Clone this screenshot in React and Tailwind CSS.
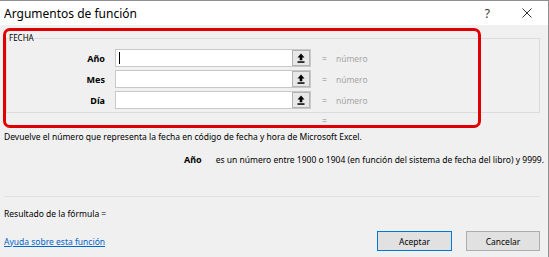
import React from 'react';

function UpArrow() {
  return (
    <svg width="8" height="10" viewBox="0 0 8 10" aria-hidden="true">
      <path d="M4 0.5 L7.5 4.5 L5.3 4.5 L5.3 7.3 L2.7 7.3 L2.7 4.5 L0.5 4.5 Z" fill="#000" />
      <rect x="0.5" y="8.3" width="7" height="1.5" fill="#000" />
    </svg>
  );
}

function ArgRow({ label, cursor }) {
  return (
    <div className="flex items-center h-[18px]">
      <span className="w-[98px] text-right font-bold text-[9px]">{label}</span>
      <div className="ml-[10px] flex h-[18px] w-[196px] border border-[#c8c8c8] bg-white">
        <div className="flex-1 flex items-center pl-[3px]">
          {cursor && <span className="block w-px h-[12px] bg-black" />}
        </div>
        <button
          type="button"
          className="flex w-[18px] items-center justify-center border border-[#b4b4b4] bg-[#e8e8e8]"
        >
          <UpArrow />
        </button>
      </div>
      <span className="ml-[11px] text-[#8c8c8c]">=</span>
      <span className="ml-[9px] text-[#a6a6a6]">número</span>
    </div>
  );
}

export default function App() {
  return (
    <div className="relative flex h-[257px] w-[549px] flex-col overflow-hidden border-t border-r border-[#8f8f8f] bg-[#f0f0f0] font-['Noto_Sans',sans-serif] text-[8.5px] leading-[15px] text-black">
      <div className="flex h-[24px] items-center bg-white pl-[4px] text-[12px]">
        <span className="flex-1">Argumentos de función</span>
        <span className="mr-[32px] text-[12px] text-[#333]">?</span>
        <svg width="10" height="10" viewBox="0 0 10 10" className="mr-[16px]" aria-hidden="true">
          <path d="M0.5 0.5 L9.5 9.5 M9.5 0.5 L0.5 9.5" stroke="#333" strokeWidth="1" />
        </svg>
      </div>

      <div className="flex flex-1 flex-col pl-[4px] pr-[8px]">
        <fieldset className="ml-[2px] mt-[7px] border border-[#dcdcdc] px-0 pb-[3px]">
          <legend className="ml-[2px] text-[8px] leading-[12px]">FECHA</legend>
          <div className="mt-[5px] flex flex-col gap-[3px]">
            <ArgRow label="Año" cursor />
            <ArgRow label="Mes" />
            <ArgRow label="Día" />
          </div>
        </fieldset>

        <div className="h-[16px] pl-[318px] leading-[16px] text-[#8c8c8c]">=</div>
        <p>Devuelve el número que representa la fecha en código de fecha y hora de Microsoft Excel.</p>
        <p className="mt-[8px] -mr-[4px] flex justify-end">
          <span className="font-bold text-[9px]">Año</span>
          <span className="ml-[14px]">es un número entre 1900 o 1904 (en función del sistema de fecha del libro) y 9999.</span>
        </p>

        <div className="mt-[29px] border-t border-[#dfdfdf]" />
        <p className="mt-[9px]">Resultado de la fórmula =</p>

        <div className="mt-[10px] flex h-[20px] items-center">
          <a href="#" className="flex-1 text-[#0066cc] underline">Ayuda sobre esta función</a>
          <button
            type="button"
            className="h-[20px] w-[75px] border border-[#0078d7] bg-[#e1e1e1]"
          >
            Aceptar
          </button>
          <button
            type="button"
            className="ml-[14px] h-[20px] w-[74px] border border-[#adadad] bg-[#e1e1e1]"
          >
            Cancelar
          </button>
        </div>
      </div>

      <div className="pointer-events-none absolute left-[3px] top-[27px] h-[100px] w-[478px] rounded-[7px] border-[3px] border-[#e00000]" />
    </div>
  );
}
